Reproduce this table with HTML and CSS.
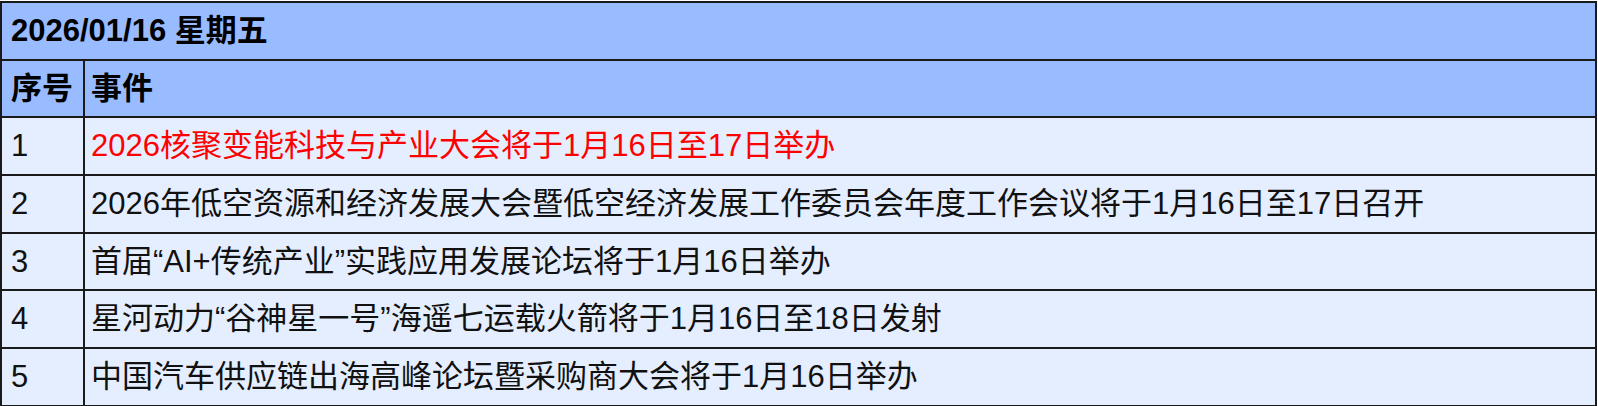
FILE: index.html
```html
<!DOCTYPE html>
<html lang="zh-CN">
<head>
<meta charset="utf-8">
<title>2026/01/16 星期五</title>
<link rel="stylesheet" href="styles.css">
</head>
<body>
<table class="events">
  <colgroup>
    <col class="col-no">
    <col class="col-ev">
  </colgroup>
  <thead>
    <tr class="head"><th colspan="2" class="date">2026/01/16 星期五</th></tr>
    <tr class="head"><th class="no">序号</th><th class="ev">事件</th></tr>
  </thead>
  <tbody>
    <tr><td class="no">1</td><td class="ev hot">2026核聚变能科技与产业大会将于1月16日至17日举办</td></tr>
    <tr><td class="no">2</td><td class="ev">2026年低空资源和经济发展大会暨低空经济发展工作委员会年度工作会议将于1月16日至17日召开</td></tr>
    <tr><td class="no">3</td><td class="ev">首届“AI+传统产业”实践应用发展论坛将于1月16日举办</td></tr>
    <tr><td class="no">4</td><td class="ev">星河动力“谷神星一号”海遥七运载火箭将于1月16日至18日发射</td></tr>
    <tr><td class="no">5</td><td class="ev">中国汽车供应链出海高峰论坛暨采购商大会将于1月16日举办</td></tr>
  </tbody>
</table>
</body>
</html>
```

FILE: styles.css
```css
html, body {
  margin: 0;
  padding: 0;
  background: #ffffff;
}

body {
  padding-top: 1px;
  font-family: "Liberation Sans", "Noto Sans CJK SC", sans-serif;
  font-size: 31px;
  color: #111111;
}

.events {
  border-collapse: collapse;
  width: 1597px;
  table-layout: fixed;
}

.col-no {
  width: 83px;
}

.events th,
.events td {
  border: 2px solid #1a1a1a;
  height: 55.7px;
  padding: 0 6px;
  text-align: left;
  vertical-align: middle;
  white-space: nowrap;
  line-height: 34px;
}

.head th {
  background: #99bbff;
  font-weight: bold;
  color: #000000;
}

.events th.date,
.events th.no,
.events td.no {
  padding-left: 9px;
}

.events td {
  background: #e5eeff;
}

.events td.hot {
  color: #ff0000;
}
```
